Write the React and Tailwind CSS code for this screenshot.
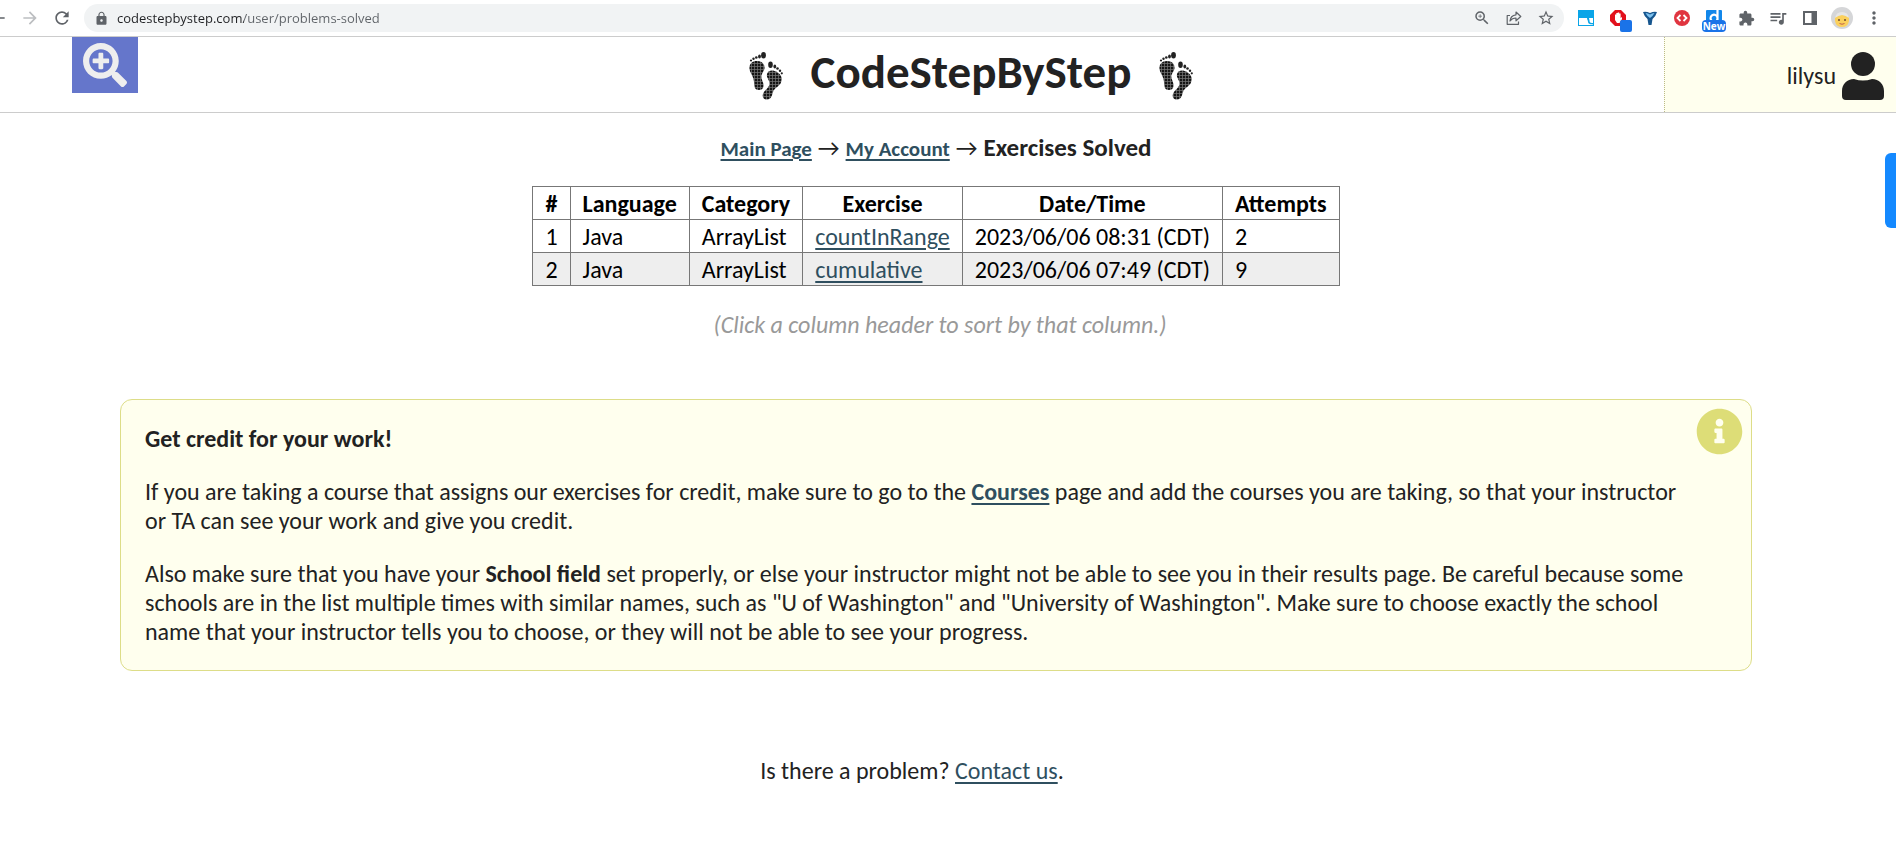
import { FaSearchPlus, FaInfoCircle } from "react-icons/fa";
import {
  MdArrowBack,
  MdArrowForward,
  MdRefresh,
  MdLock,
  MdZoomIn,
  MdStarBorder,
  MdExtension,
  MdQueueMusic,
  MdMoreVert,
} from "react-icons/md";

const linkStyle = "text-[#2f4f5f] underline decoration-2 underline-offset-3";

function Feet() {
  return (
    <svg viewBox="0 0 34 48" className="h-12 w-[34px] shrink-0" aria-hidden="true">
      <defs>
        <pattern id="mesh" width="3" height="3" patternUnits="userSpaceOnUse">
          <rect width="3" height="3" fill="#777" />
          <rect width="2.300" height="2.300" fill="#151515" />
        </pattern>
      </defs>
      <g fill="url(#mesh)">
        <path d="M0.500 17C0 12 3 9 8 9C13 9 16 12 15.500 16.500C15 20 11.500 22 12.500 26C13 29 15 31 14.500 34.500C14 38 10 38.500 7.500 37.500C4.500 36 5.500 31 4.500 27C3.500 23 1 21 0.500 17Z" />
        <path d="M18 22C19 18 24 17.500 28 20C32 22.500 34 26 32 30.500C30.500 34.500 25 36 24 40C23 43.500 22 47.500 18.500 47.500C14.500 48 13 45 14 42C15 38.500 20 36 20.500 32C21 28 17 26 18 22Z" />
      </g>
      <g fill="#222">
        <ellipse cx="14.500" cy="3.200" rx="2.400" ry="3.200" />
        <ellipse cx="10.500" cy="4.500" rx="1.400" ry="1.900" />
        <circle cx="7.300" cy="5.500" r="1.300" />
        <circle cx="4.500" cy="6.800" r="1.200" />
        <circle cx="2" cy="8.500" r="1.100" />
        <ellipse cx="21.500" cy="12.800" rx="2.300" ry="3.200" />
        <ellipse cx="25.800" cy="14.500" rx="1.400" ry="1.900" />
        <circle cx="28.500" cy="16.500" r="1.300" />
        <circle cx="31" cy="18.700" r="1.200" />
        <circle cx="32.800" cy="21.300" r="1.100" />
      </g>
    </svg>
  );
}

function BarButton({ label, className = "", children }) {
  return (
    <button aria-label={label} className={`flex h-7 w-8 shrink-0 items-center justify-center ${className}`}>
      {children}
    </button>
  );
}

function ShareIcon() {
  return (
    <svg viewBox="0 0 16 16" className="size-4" fill="none" stroke="currentColor" strokeWidth="1.200" strokeLinejoin="round">
      <path d="M4 5.500H1.200V14.300H12.500V11.500" />
      <path d="M4 11C4.300 7.500 6.500 5.200 10 4.800V2L14.800 6.500L10 10.800V8C7.500 8 5.500 9 4 11Z" />
    </svg>
  );
}

function BrowserBar() {
  return (
    <div className="flex h-9 items-center gap-1.5 overflow-hidden bg-white pr-1.5 text-[#5f6368]">
      <div className="-ml-[18px] flex shrink-0">
        <BarButton label="Back"><MdArrowBack className="size-5" /></BarButton>
        <BarButton label="Forward" className="text-[#bcbec1]"><MdArrowForward className="size-5" /></BarButton>
        <BarButton label="Reload"><MdRefresh className="size-5" /></BarButton>
      </div>
      <div className="flex h-7 flex-1 items-center rounded-full bg-[#f1f3f4] pr-0.5 pl-2.5">
        <MdLock className="mr-2 size-[15px]" />
        <input
          aria-label="Address"
          readOnly
          defaultValue="codestepbystep.com/user/problems-solved"
          className="min-w-0 flex-1 bg-[linear-gradient(90deg,#202124_127px,#5f6368_127px)] bg-clip-text font-['Open_Sans',sans-serif] text-[13px] text-transparent outline-none"
        />
        <BarButton label="Zoom"><MdZoomIn className="size-[18px]" /></BarButton>
        <BarButton label="Share"><ShareIcon /></BarButton>
        <BarButton label="Bookmark"><MdStarBorder className="size-[18px]" /></BarButton>
      </div>
      <div className="flex shrink-0">
        <BarButton label="Tab images">
          <svg viewBox="0 0 16 16" className="size-4">
            <rect width="16" height="16" fill="#0aa5e8" />
            <path d="M1 8H9C9 10 10 10 10 12C10.500 14.500 13 14 15 14.500V15H1Z" fill="#fff" />
            <path d="M11 8H15V13C12 13.500 11.500 12 11.500 10.500Z" fill="#fff" />
          </svg>
        </BarButton>
        <BarButton label="Content blocker">
          <svg viewBox="0 0 22 22" className="mt-1.5 ml-1.5 size-[22px]">
            <path d="M5 0H11L16 5V11L11 16H5L0 11V5Z" fill="#e2101c" />
            <path d="M5 8V4.500H6.300V3H7.700V2.500H9.200V3.500H10.600V8L12 7V9L9.500 13H7L5 10Z" fill="#fff" />
            <rect x="10" y="10" width="12" height="12" rx="2" fill="#1a73e8" />
          </svg>
        </BarButton>
        <BarButton label="Sparkle">
          <svg viewBox="0 0 14 14" className="size-3.5">
            <path d="M0 1Q3 0 7 2Q11 0 14 1Q13 5 9.500 8L8.500 14H5.500L4.500 8Q1 5 0 1Z" fill="#17568f" />
            <path d="M2.500 2Q5 2 7 3.500Q9 2 11.500 2Q10 5 7 7Q4 5 2.500 2Z" fill="#7fc3f0" />
          </svg>
        </BarButton>
        <BarButton label="Code view">
          <svg viewBox="0 0 16 16" className="size-4" fill="none">
            <circle cx="8" cy="8" r="8" fill="#e03540" />
            <path d="M6.500 5L3.500 8L6.500 11M9.500 5L12.500 8L9.500 11" stroke="#fff" strokeWidth="1.800" />
          </svg>
        </BarButton>
        <BarButton label="Documents" className="relative">
          <svg viewBox="0 0 16 16" className="size-4" fill="none">
            <rect width="16" height="16" rx="1" fill="#1287ea" />
            <path d="M11.500 0V12M11.500 8A3.500 3.500 0 1 0 11.500 8.500" stroke="#fff" strokeWidth="2.200" />
          </svg>
          <span className="absolute bottom-0 left-1 h-3 w-6 rounded-sm bg-[#1a73e8] font-['Open_Sans',sans-serif] text-[10px] leading-3 font-bold text-white">New</span>
        </BarButton>
        <BarButton label="Extensions"><MdExtension className="size-[17px]" /></BarButton>
        <BarButton label="Media"><MdQueueMusic className="size-5" /></BarButton>
        <BarButton label="Side panel">
          <svg viewBox="0 0 14 14" className="size-3.5">
            <path fillRule="evenodd" d="M0 0H14V14H0ZM2 2V12H8.500V2Z" fill="currentColor" />
          </svg>
        </BarButton>
        <BarButton label="Profile">
          <svg viewBox="0 0 22 22" className="size-[22px]">
            <circle cx="11" cy="11" r="11" fill="#d5d6d8" />
            <path d="M4 10Q11 6 18 10V14Q17 20 11 20Q5 20 4 14Z" fill="#fbd05c" />
            <path d="M4 11Q5 5 11 5Q17 5 18 11Q14 8 11 8Q8 8 4 11Z" fill="#e6e6e6" />
            <circle cx="8" cy="13" r="1" fill="#6b4a2b" />
            <circle cx="14" cy="13" r="1" fill="#6b4a2b" />
            <path d="M8.500 16.500Q11 18 13.500 16.500" stroke="#c0604a" fill="none" />
          </svg>
        </BarButton>
        <BarButton label="Menu"><MdMoreVert className="size-5" /></BarButton>
      </div>
    </div>
  );
}

function PersonIcon() {
  return (
    <svg viewBox="0 0 42 48" className="h-12 w-[42px]" fill="#222" aria-hidden="true">
      <circle cx="21" cy="12" r="12" />
      <path d="M12 27Q21 30 30 27C37 27 42 32 42 39V44Q42 48 38 48H4Q0 48 0 44V39C0 32 5 27 12 27Z" />
    </svg>
  );
}

const headings = ["#", "Language", "Category", "Exercise", "Date/Time", "Attempts"];
const rows = [
  { id: "1", language: "Java", category: "ArrayList", exercise: "countInRange", solved: "2023/06/06 08:31 (CDT)", attempts: "2" },
  { id: "2", language: "Java", category: "ArrayList", exercise: "cumulative", solved: "2023/06/06 07:49 (CDT)", attempts: "9" },
];
const cell = "h-[33px] border border-[#777] px-3";

export default function App() {
  return (
    <div className="relative min-h-screen overflow-x-hidden bg-white font-['Carlito','Lato',sans-serif] text-2xl leading-[29px] text-[#222]">
      <BrowserBar />
      <header className="flex h-[77px] border-y border-[#ccc]">
        <div className="w-[278px] shrink-0 pl-[72px]">
          <button aria-label="Zoom in" className="flex h-14 w-[66px] items-center justify-center bg-[#6576cb] text-[#eee]">
            <FaSearchPlus className="size-11" />
          </button>
        </div>
        <div className="flex flex-1 items-center justify-center gap-7 pt-0.5">
          <Feet />
          <h1 className="pb-1.5 text-[47px] font-bold">CodeStepByStep</h1>
          <Feet />
        </div>
        <a href="#account" className="flex w-[232px] shrink-0 items-center justify-end gap-1.5 border-l border-dotted border-[#bb8] bg-[#ffffee] pt-0.5 pr-3">
          lilysu
          <PersonIcon />
        </a>
      </header>
      <button aria-label="Feedback" className="absolute top-[153px] right-0 h-[75px] w-[11px] rounded-l-md bg-[#1489ff]" />
      <main className="flex flex-col items-center pr-6">
        <nav className="mt-5 flex items-baseline gap-1.5">
          <a href="#main" className={`text-[21px] font-bold ${linkStyle}`}>Main Page</a>
          <span>→</span>
          <a href="#my-account" className={`text-[21px] font-bold ${linkStyle}`}>My Account</a>
          <span>→</span>
          <h2 className="text-[25px] font-bold">Exercises Solved</h2>
        </nav>
        <table className="mt-[22px] border-collapse text-black">
          <thead>
            <tr>{headings.map((h) => <th key={h} className={cell}>{h}</th>)}</tr>
          </thead>
          <tbody>
            {rows.map((r) => (
              <tr key={r.id} className="even:bg-[#eee]">
                <td className={cell}>{r.id}</td>
                <td className={cell}>{r.language}</td>
                <td className={cell}>{r.category}</td>
                <td className={cell}><a href={`#${r.exercise}`} className={linkStyle}>{r.exercise}</a></td>
                <td className={cell}>{r.solved}</td>
                <td className={cell}>{r.attempts}</td>
              </tr>
            ))}
          </tbody>
        </table>
        <p className="mt-6 pl-2 text-[#999] italic">(Click a column header to sort by that column.)</p>
        <div className="mt-15 w-full pr-[120px] pl-[120px]">
          <section className="relative space-y-6 rounded-xl border border-[#dddd88] bg-[#ffffee] py-6 pr-16 pl-6">
            <FaInfoCircle className="absolute top-2 right-2 size-[47px] text-[#dddd77]" />
            <p className="font-bold">Get credit for your work!</p>
            <p>
              If you are taking a course that assigns our exercises for credit, make sure to go to the{" "}
              <a href="#courses" className={`font-bold ${linkStyle}`}>Courses</a> page and add the courses you are taking, so that your instructor or TA can see your work and give you credit.
            </p>
            <p>
              Also make sure that you have your <strong>School field</strong> set properly, or else your instructor might not be able to see you in their results page. Be careful because some schools are in the list multiple times with similar names, such as "U of Washington" and "University of Washington". Make sure to choose exactly the school name that your instructor tells you to choose, or they will not be able to see your progress.
            </p>
          </section>
        </div>
        <footer className="mt-[85px] pr-12">
          Is there a problem? <a href="#contact" className={linkStyle}>Contact us</a>.
        </footer>
      </main>
    </div>
  );
}
